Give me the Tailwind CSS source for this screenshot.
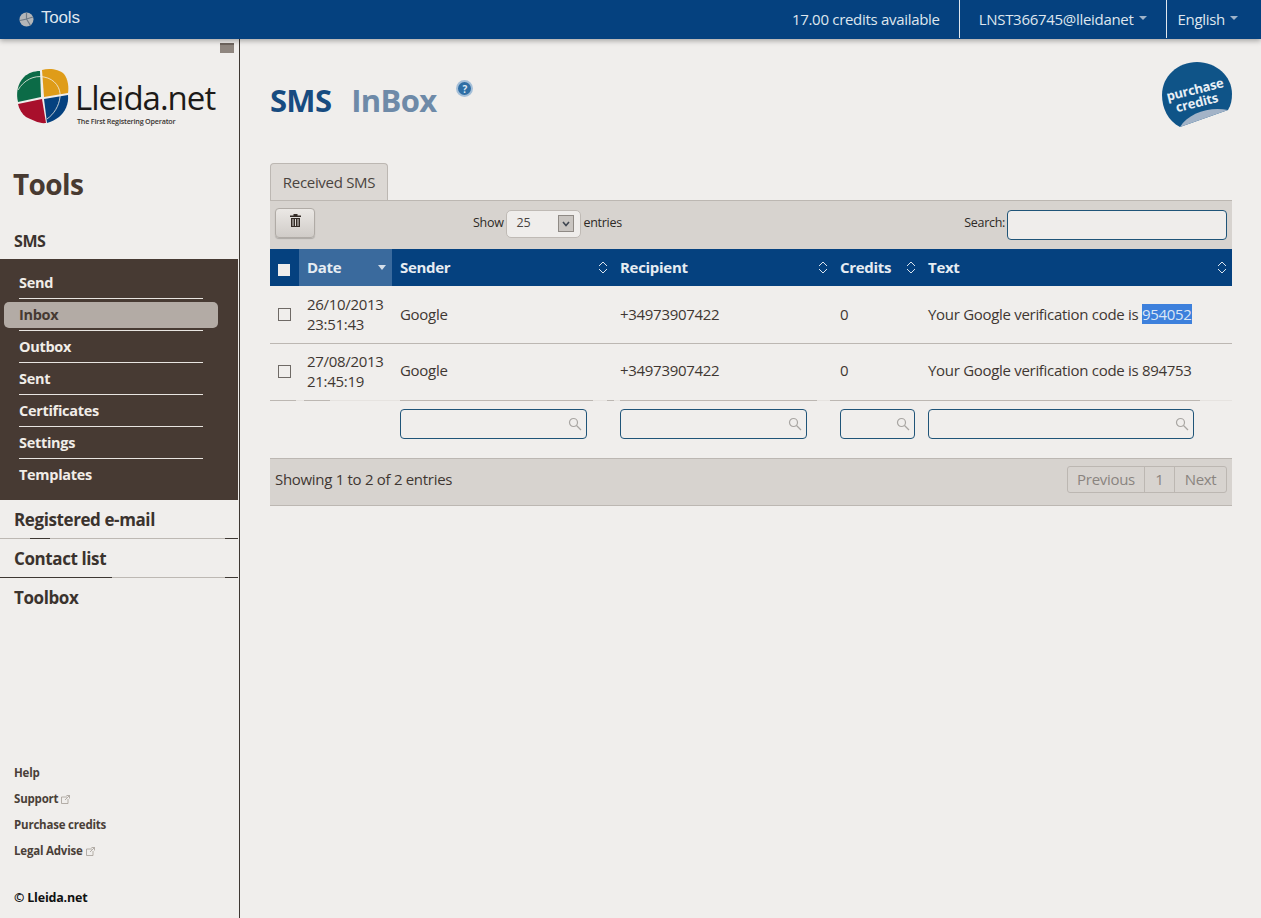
<!DOCTYPE html>
<html lang="en">
<head>
    <meta charset="UTF-8">
    <title>Tools</title>
    <script src="https://cdn.jsdelivr.net/npm/@tailwindcss/browser@4"></script>
</head>
<body class="h-[918px] overflow-hidden bg-[#f0eeec] font-['Open_Sans',sans-serif] text-[#3f3732]">
    <!-- Top bar -->
    <header class="relative z-10 flex h-[39px] items-center justify-between bg-[#05417f] text-[#dfe6ee] shadow-[0_2px_5px_rgba(0,0,0,0.3)]">
        <div class="flex items-center pl-[19px]">
            <svg class="h-[15px] w-[15px]" viewBox="0 0 15 15">
                <circle cx="7.5" cy="7.5" r="7" fill="#b4b6b8"/>
                <path d="M7.5.5V7L1 8.5M7.5 7l4 6.5M7.5 7L14 5" stroke="#6f7a86" stroke-width="1.2" fill="none"/>
            </svg>
            <span class="relative top-[-2px] ml-[7px] font-['Liberation_Sans',sans-serif] text-[17px] tracking-[-0.2px]">Tools</span>
        </div>
        <div class="flex h-[38px] items-center self-start text-[15px] tracking-[-0.3px]">
            <span class="pr-[19px]">17.00 credits available</span>
            <div class="flex h-full items-center gap-[5px] border-l border-[#dfe6ee] pl-[19px] pr-[19px]">
                LNST366745@lleidanet <span class="mb-[3px] h-0 w-0 border-x-[4px] border-t-[4px] border-x-transparent border-t-[#9fb3c9]"></span>
            </div>
            <div class="flex h-full items-center gap-[5px] border-l border-[#dfe6ee] pl-[11px] pr-[23px]">
                English <span class="mb-[3px] h-0 w-0 border-x-[4px] border-t-[4px] border-x-transparent border-t-[#9fb3c9]"></span>
            </div>
        </div>
    </header>

    <div class="flex h-[879px]">
        <!-- Sidebar -->
        <aside class="relative flex w-[240px] shrink-0 flex-col border-r border-[#3e3833]">
            <div class="absolute right-[5px] top-[4px] h-[10px] w-[14px] border-t-2 border-[#6e655e] bg-[#8f867f]"></div>
            <!-- Logo -->
            <div class="ml-[16px] mt-[29px] flex h-[57px] items-start">
                <svg class="h-[57px] w-[53px] shrink-0" viewBox="0 0 53 57">
                    <path d="M25 29L2 34C0 26 1 16 8 9 12 5 18 3 24 3Z" fill="#0c6b47"/>
                    <path d="M26 2C33 0 43 1 48 6 52 11 53 19 52 25L28 29Z" fill="#df9c18"/>
                    <path d="M28 31L52 27C53 36 49 44 43 49 39 52 35 54 31 55Z" fill="#05417f"/>
                    <path d="M26 31L30 55C24 56 16 52 10 49 6 46 3 41 2 36Z" fill="#a80f2c"/>
                    <path d="M2 22C8 12 18 7 28 9 39 11 45 20 44 29 43 38 38 46 31 51" fill="none" stroke="#f3efe6" stroke-width="0.8"/>
                </svg>
                <div class="ml-[6px] flex flex-col">
                    <span class="mt-[12px] text-[33px] leading-[36px] tracking-[-1px] text-[#1d1a18]">Lleida.net</span>
                    <span class="ml-[2px] text-[7.2px] font-semibold leading-[10px] tracking-[-0.2px] text-[#3a3532]">The First Registering Operator</span>
                </div>
            </div>

            <h1 class="ml-[13px] mt-[39px] text-[28px] font-bold leading-[40px] tracking-[-0.6px] text-[#483a31]">Tools</h1>
            <div class="ml-[14px] mt-[25px] h-[30px] text-[16px] font-bold leading-[24px] tracking-[-0.4px] text-[#3b332e]">SMS</div>

            <nav class="flex h-[241px] w-[238px] flex-col bg-[#473a33] pt-[8px] text-[14.5px] font-bold tracking-[-0.3px] text-[#f1ede8]">
                <a class="mx-[19px] flex h-[32px] w-[184px] items-center border-b border-[#e9e5e1]">Send</a>
                <a class="my-[3px] -mb-[1px] ml-[4px] flex h-[26px] w-[214px] items-center rounded-[5px] bg-[#b3aba5] pl-[15px] text-[#463a33]">Inbox</a>
                <a class="mx-[19px] mt-[3px] flex h-[33px] w-[184px] items-center border-y border-[#e9e5e1]">Outbox</a>
                <a class="mx-[19px] flex h-[32px] w-[184px] items-center border-b border-[#e9e5e1]">Sent</a>
                <a class="mx-[19px] flex h-[32px] w-[184px] items-center border-b border-[#e9e5e1]">Certificates</a>
                <a class="mx-[19px] flex h-[32px] w-[184px] items-center border-b border-[#e9e5e1]">Settings</a>
                <a class="mx-[19px] flex h-[32px] w-[184px] items-center">Templates</a>
            </nav>

            <div class="text-[17px] font-bold tracking-[-0.4px] text-[#3b332e]">
                <div class="flex h-[38px] items-center pl-[14px] pt-[2px]">Registered e-mail</div>
                <div class="flex h-[1px]">
                    <span class="w-[30px] bg-[#bdb8b3]"></span><span class="w-[20px] bg-[#3e3833]"></span><span class="w-[175px] bg-[#bdb8b3]"></span><span class="w-[13px] bg-[#3e3833]"></span>
                </div>
                <div class="flex h-[38px] items-center pl-[14px] pt-[2px]">Contact list</div>
                <div class="flex h-[1px]">
                    <span class="w-[112px] bg-[#3e3833]"></span><span class="w-[113px] bg-[#bdb8b3]"></span><span class="w-[13px] bg-[#3e3833]"></span>
                </div>
                <div class="flex h-[40px] items-center pl-[14px]">Toolbox</div>
            </div>

            <div class="ml-[14px] mt-auto flex flex-col text-[11.5px] font-bold tracking-[-0.2px] text-[#4a3f38]">
                <a class="flex h-[26px] items-center">Help</a>
                <a class="flex h-[26px] items-center gap-[3px]">Support
                    <svg class="h-[9px] w-[9px]" viewBox="0 0 9 9" fill="none" stroke="#a39c96" stroke-width="0.8"><path d="M6 2H.5v6.5H7V4M4 5l4.500-4.500M5.500.5h3v3"/></svg>
                </a>
                <a class="flex h-[26px] items-center">Purchase credits</a>
                <a class="flex h-[26px] items-center gap-[3px]">Legal Advise
                    <svg class="h-[9px] w-[9px]" viewBox="0 0 9 9" fill="none" stroke="#a39c96" stroke-width="0.8"><path d="M6 2H.5v6.5H7V4M4 5l4.500-4.500M5.500.5h3v3"/></svg>
                </a>
                <div class="mb-[7px] mt-[21px] flex h-[26px] items-center text-[12.5px] font-bold text-[#111]">© Lleida.net</div>
            </div>
        </aside>

        <!-- Main -->
        <main class="relative ml-[30px] w-[962px]">
            <div class="flex h-[124px] items-start">
                <h2 class="mt-[41px] text-[31px] font-bold leading-[40px] tracking-[-0.7px] text-[#174b80]">SMS</h2>
                <h2 class="ml-[20px] mt-[41px] text-[31px] font-bold leading-[40px] tracking-[-0.7px] text-[#6e8aa8]">InBox</h2>
                <span class="ml-[20px] mt-[41px] flex h-[17px] w-[17px] items-center justify-center rounded-full border-2 border-[#a5bfd8] bg-[#2f6ea5] text-[10px] font-bold leading-none text-[#dce8f2]">?</span>
                <svg class="absolute right-0 top-[22px] h-[68px] w-[72px]" viewBox="0 0 72 68">
                    <path d="M20 66C8 60 2 47 2 34 2 15 18 1 37 1 56 1 72 15 72 33 72 39 71 44 68 49Z" fill="#0f5488"/>
                    <path d="M20 66C28 52 50 45 68 49Z" fill="#a3b3c7"/>
                    <text x="36" y="33" text-anchor="middle" transform="rotate(-14 36 33)" font-family="Open Sans" font-weight="700" font-size="13" letter-spacing="-0.2" fill="#e8eff5">purchase</text>
                    <text x="38" y="46" text-anchor="middle" transform="rotate(-14 38 46)" font-family="Open Sans" font-weight="700" font-size="13" letter-spacing="-0.2" fill="#e8eff5">credits</text>
                </svg>
            </div>

            <!-- Tab -->
            <div class="flex h-[37px] w-[118px] items-center justify-center rounded-t-[4px] border border-b-0 border-[#bcb7b2] bg-[#dcd8d4] text-[15px] tracking-[-0.3px] text-[#4a4440]">Received SMS</div>

            <!-- Toolbar -->
            <div class="flex h-[49px] items-center border-t border-[#bcb7b2] bg-[#d7d3cf] pb-[3px] text-[12.5px] tracking-[-0.3px] text-[#2d2926]">
                <button class="mb-[2px] ml-[5px] flex h-[30px] w-[40px] items-start justify-center rounded-[4px] border border-[#b0aba6] bg-gradient-to-b from-[#ebe8e5] to-[#d0ccc8] pt-[5px] shadow-[0_1px_1px_rgba(0,0,0,0.2)]">
                    <svg class="h-[13px] w-[11px]" viewBox="0 0 11 13" fill="#332b26">
                        <path d="M3.5 0h4v1.500H11V3H0V1.500h3.500zM1 4h9v9H1zM2.500 5v7h1V5zM5 5v7h1V5zM7.500 5v7h1V5z" fill-rule="evenodd"/>
                    </svg>
                </button>
                <span class="ml-[158px]">Show</span>
                <div class="ml-[2px] flex h-[28px] w-[75px] items-center justify-between rounded-[5px] border border-[#bfbab5] bg-[#efedeb] pl-[10px] pr-[6px] text-[#4a4440]">
                    25
                    <span class="flex h-[17px] w-[16px] items-center justify-center border border-[#8f8a85] bg-[#c9c5c1]">
                        <svg class="h-[6px] w-[8px]" viewBox="0 0 8 6" fill="none" stroke="#3f4650" stroke-width="1.6"><path d="M1 1l3 3.500L7 1"/></svg>
                    </span>
                </div>
                <span class="ml-[3px]">entries</span>
                <span class="ml-auto mr-[2px]">Search:</span>
                <input class="mr-[5px] mt-[2px] h-[30px] w-[220px] rounded-[4px] border border-[#1f5478] bg-[#efedeb]" type="text">
            </div>

            <!-- Table -->
            <table class="w-[962px] table-fixed border-collapse text-[15px] tracking-[-0.3px]">
                <colgroup>
                    <col class="w-[29px]"><col class="w-[93px]"><col class="w-[220px]"><col class="w-[220px]"><col class="w-[88px]"><col>
                </colgroup>
                <thead>
                    <tr class="h-[37px] bg-[#05417f] text-left font-bold text-[#e6ecf2]">
                        <th class="pl-[8px]"><span class="mt-[4px] block h-[12px] w-[12px] bg-[#efedeb]"></span></th>
                        <th class="bg-[#3a6a9d] pl-[8px]">
                            <div class="flex items-center justify-between pr-[6px]">Date <span class="h-0 w-0 border-x-[4.5px] border-t-[5px] border-x-transparent border-t-[#d5dfea]"></span></div>
                        </th>
                        <th class="pl-[8px]">
                            <div class="flex items-center justify-between pr-[4px]">Sender
                                <svg class="h-[13px] w-[10px]" viewBox="0 0 10 13" fill="none" stroke="#dbe4ed"><path d="M1 5l4-4 4 4M1 8l4 4 4-4"/></svg>
                            </div>
                        </th>
                        <th class="pl-[8px]">
                            <div class="flex items-center justify-between pr-[4px]">Recipient
                                <svg class="h-[13px] w-[10px]" viewBox="0 0 10 13" fill="none" stroke="#dbe4ed"><path d="M1 5l4-4 4 4M1 8l4 4 4-4"/></svg>
                            </div>
                        </th>
                        <th class="pl-[8px]">
                            <div class="flex items-center justify-between pr-[4px]">Credits
                                <svg class="h-[13px] w-[10px]" viewBox="0 0 10 13" fill="none" stroke="#dbe4ed"><path d="M1 5l4-4 4 4M1 8l4 4 4-4"/></svg>
                            </div>
                        </th>
                        <th class="pl-[8px]">
                            <div class="flex items-center justify-between pr-[5px]">Text
                                <svg class="h-[13px] w-[10px]" viewBox="0 0 10 13" fill="none" stroke="#dbe4ed"><path d="M1 5l4-4 4 4M1 8l4 4 4-4"/></svg>
                            </div>
                        </th>
                    </tr>
                </thead>
                <tbody>
                    <tr class="h-[57px] border-b border-[#bcb7b2]">
                        <td class="pl-[8px]"><span class="block h-[13px] w-[13px] border border-[#6f6a66]"></span></td>
                        <td class="pl-[8px] leading-[20px]">26/10/2013<br>23:51:43</td>
                        <td class="pl-[8px]">Google</td>
                        <td class="pl-[8px]">+34973907422</td>
                        <td class="pl-[8px]">0</td>
                        <td class="pl-[8px]">Your Google verification code is <span class="bg-[#3d80dc] text-[#dbe7f5]">954052</span></td>
                    </tr>
                    <tr class="h-[57px]">
                        <td class="pl-[8px]"><span class="block h-[13px] w-[13px] border border-[#6f6a66]"></span></td>
                        <td class="pb-[2px] pl-[8px] leading-[20px]">27/08/2013<br>21:45:19</td>
                        <td class="pb-[3px] pl-[8px]">Google</td>
                        <td class="pb-[3px] pl-[8px]">+34973907422</td>
                        <td class="pb-[3px] pl-[8px]">0</td>
                        <td class="pb-[3px] pl-[8px]">Your Google verification code is 894753</td>
                    </tr>
                    <tr class="h-[1px]">
                        <td colspan="6" class="p-0">
                            <div class="flex h-[1px] bg-[#e6e3e0]">
                                <span class="w-[26px] bg-[#bcb7b2]"></span><span class="ml-[8px] w-[26px] bg-[#bcb7b2]"></span><span class="ml-[70px] w-[193px] bg-[#bcb7b2]"></span><span class="ml-[14px] w-[7px] bg-[#bcb7b2]"></span><span class="ml-[6px] w-[197px] bg-[#bcb7b2]"></span><span class="ml-[13px] w-[370px] bg-[#bcb7b2]"></span>
                            </div>
                        </td>
                    </tr>
                    <tr class="h-[57px]">
                        <td></td>
                        <td></td>
                        <td class="pl-[8px] pt-[8px] align-top">
                            <div class="flex h-[30px] w-[187px] items-center justify-end rounded-[4px] border border-[#1f5478] pr-[4px]">
                                <svg class="h-[14px] w-[14px]" viewBox="0 0 14 14" fill="none" stroke="#a8a5a2" stroke-width="1.2"><circle cx="5.5" cy="5.5" r="4"/><path d="M8.5 8.5L13 13"/></svg>
                            </div>
                        </td>
                        <td class="pl-[8px] pt-[8px] align-top">
                            <div class="flex h-[30px] w-[187px] items-center justify-end rounded-[4px] border border-[#1f5478] pr-[4px]">
                                <svg class="h-[14px] w-[14px]" viewBox="0 0 14 14" fill="none" stroke="#a8a5a2" stroke-width="1.2"><circle cx="5.5" cy="5.5" r="4"/><path d="M8.5 8.5L13 13"/></svg>
                            </div>
                        </td>
                        <td class="pl-[8px] pt-[8px] align-top">
                            <div class="flex h-[30px] w-[75px] items-center justify-end rounded-[4px] border border-[#1f5478] pr-[4px]">
                                <svg class="h-[14px] w-[14px]" viewBox="0 0 14 14" fill="none" stroke="#a8a5a2" stroke-width="1.2"><circle cx="5.5" cy="5.5" r="4"/><path d="M8.5 8.5L13 13"/></svg>
                            </div>
                        </td>
                        <td class="pl-[8px] pt-[8px] align-top">
                            <div class="flex h-[30px] w-[266px] items-center justify-end rounded-[4px] border border-[#1f5478] pr-[4px]">
                                <svg class="h-[14px] w-[14px]" viewBox="0 0 14 14" fill="none" stroke="#a8a5a2" stroke-width="1.2"><circle cx="5.5" cy="5.5" r="4"/><path d="M8.5 8.5L13 13"/></svg>
                            </div>
                        </td>
                    </tr>
                </tbody>
            </table>

            <!-- Footer -->
            <div class="flex h-[48px] items-center justify-between border-y border-[#bcb7b2] bg-[#d7d3cf] pb-[6px] pl-[5px] pr-[5px] text-[15px] tracking-[-0.3px] text-[#3f3732]">
                <span>Showing 1 to 2 of 2 entries</span>
                <div class="flex h-[27px] items-center rounded-[3px] border border-[#bcb7b2] text-[#8a847f]">
                    <span class="flex h-full w-[77px] items-center justify-center border-r border-[#bcb7b2]">Previous</span>
                    <span class="flex h-full w-[30px] items-center justify-center border-r border-[#bcb7b2]">1</span>
                    <span class="flex h-full w-[51px] items-center justify-center">Next</span>
                </div>
            </div>
        </main>
    </div>
</body>
</html>
